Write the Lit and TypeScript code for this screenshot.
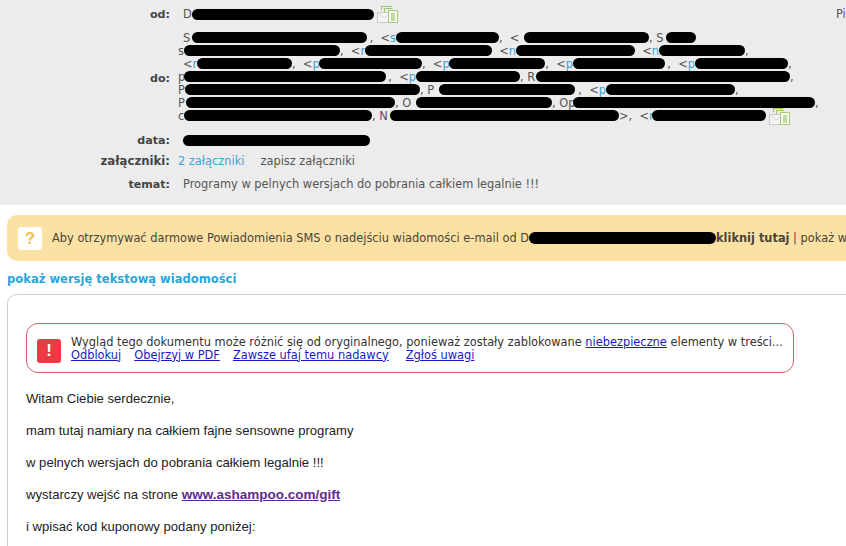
import { html, css, LitElement, svg } from "lit";
import { customElement } from "lit/decorators.js";

// text segment: [text, width, blue letter], redaction: number
type Seg = [string, number, string?] | number;

const recipients: Seg[][] = [
  [["S", 9], 175, [",  <", 29, "s"], 103, [",  <", 25], 125, [", S", 17], 30],
  [["s", 6], 156, [",  <", 25, "r"], 127, ["  <", 24, "n"], 119, ["  <", 24, "n"], 86, [",", 8]],
  [["<", 14, "r"], 95, [",  <", 27, "p"], 103, [",  <", 27, "p"], 96, [",  <", 28, "p"], 92, [",  <", 30, "p"], 93, [",", 8]],
  [["p", 6], 202, [",  <", 30, "p"], 104, [", R", 16], 254, [",", 8]],
  [["P", 7], 235, [", P", 19], 136, [",  <", 31, "p"], 129, [",", 8]],
  [["P", 8], 209, [", O", 21], 136, [", Op", 21], 242, [",", 8]],
  [["c", 6], 188, [", N", 18], 229, [">,  <", 33, "n"], 114]
];

@customElement("app-root")
export class AppRoot extends LitElement {
  static styles = css`
    :host {
      display: block;
      width: 846px;
      height: 546px;
      overflow: hidden;
      background: #fff;
      font-family: "DejaVu Sans", Verdana, sans-serif;
      font-size: 11.4px;
      color: #555;
    }
    .head {
      background: #ececec;
      height: 205px;
      padding-top: 5px;
      box-sizing: border-box;
    }
    .row {
      display: grid;
      grid-template-columns: 170px 1fr;
      column-gap: 13px;
      align-items: center;
    }
    .label {
      text-align: right;
      font-weight: bold;
      font-size: 11.1px;
      color: #444;
    }
    .label.wide { font-size: 11.7px; }
    .od { height: 17px; margin-bottom: 9px; }
    .od .value { display: flex; align-items: center; }
    .pi { margin-left: auto; white-space: nowrap; width: 10px; overflow: hidden; }
    .do { margin-bottom: 9px; }
    .do .label { padding-top: 3px; }
    .lines { margin-left: -5px; }
    .line { display: flex; align-items: center; height: 13px; white-space: nowrap; }
    .line:first-child, .line.indent { margin-left: 5px; }
    .seg { flex: none; white-space: pre; }
    .gap { text-align: right; }
    .blue, .att { color: #3aa5d6; }
    .pill {
      flex: none;
      display: inline-block;
      height: 11px;
      border-radius: 6px;
      background: #000;
    }
    .line svg { margin-left: 3px; flex: none; }
    .tall { height: 18px; margin-bottom: 3px; }
    .tall.last { margin-top: 5px; }
    .tall .value { display: flex; }
    .att-row { margin-left: -5px; }
    .att { margin-right: 16px; }
    .banner {
      margin: 10px 0 0 7px;
      width: 900px;
      height: 46px;
      box-sizing: border-box;
      padding-left: 11px;
      background: #fbe2a4;
      border-radius: 10px 0 0 10px;
      display: flex;
      align-items: center;
      white-space: pre;
      color: #4a4436;
    }
    .q {
      flex: none;
      width: 24px;
      height: 23px;
      margin-right: 10px;
      background: #fff;
      border-radius: 3px;
      text-align: center;
      font: bold 17px/23px "Liberation Sans", Arial, sans-serif;
      color: #f2c052;
    }
    .banner .pill { width: 187px; height: 12px; }
    .show {
      display: block;
      margin: 11px 0 8px 7px;
      line-height: 14px;
      font-size: 11.55px;
      font-weight: bold;
      color: #2aa6dc;
      text-decoration: none;
    }
    .card {
      margin-left: 7px;
      width: 900px;
      height: 260px;
      box-sizing: border-box;
      border: 1px solid #ccc;
      border-radius: 10px 0 0 0;
      padding: 28px 0 0 18px;
    }
    .alert {
      width: 768px;
      height: 50px;
      box-sizing: border-box;
      border: 1px solid #d2606e;
      border-radius: 12px;
      display: flex;
      align-items: center;
      padding-left: 10px;
      color: #333;
      line-height: 13px;
    }
    .alert-text { margin-top: 1px; }
    .bang {
      flex: none;
      width: 24px;
      height: 24px;
      margin: 6px 10px 0 0;
      background: #ec3a44;
      border-radius: 3px;
      text-align: center;
      font: bold 17px/24px "Liberation Sans", Arial, sans-serif;
      color: #fff;
    }
    .alert a { color: #1a1ac0; text-decoration: underline; }
    .links { display: flex; column-gap: 13px; }
    .links a:last-child { margin-left: 4px; }
    .body {
      font-family: "Liberation Sans", Arial, sans-serif;
      font-size: 13.1px;
      line-height: 16px;
      color: #222;
      margin-top: 18px;
    }
    .body p { margin: 0 0 16px; white-space: nowrap; }
    .body a { color: #5a2d91; font-size: 13.5px; font-weight: bold; text-decoration: underline; }
  `;

  private pagesIcon() {
    return html`<svg width="21" height="18" viewBox="0 0 21 18">
      ${svg`<rect x="0.5" y="7.5" width="14" height="10" fill="#f4f4f4" stroke="#c8ccc4"/>
        <path d="M0.5 8 L7 13 L14 8" fill="none" stroke="#d4d8d0"/>
        <path d="M4.5 5 V1.5 H14.5" fill="none" stroke="#9cc46c"/>
        <path d="M7.5 7 V3.5 H15.5" fill="none" stroke="#9cc46c"/>
        <rect x="11.5" y="5.5" width="9" height="12" fill="#f6fbee" stroke="#a8cc7c"/>
        <path d="M14 9 H18 M14 11 H18 M14 13 H18 M14 15 H18" stroke="#8dbb5c"/>`}
    </svg>`;
  }

  private renderLine(segs: Seg[], i: number) {
    return html`<div class="line ${i === 2 ? "indent" : ""}">
      ${segs.map((s) =>
        typeof s === "number"
          ? html`<span class="pill" style="width:${s}px"></span>`
          : html`<span class="seg ${s[2] ? "gap" : ""}" style="width:${s[1]}px">${s[0]}${s[2] ? html`<span class="blue">${s[2]}</span>` : ""}</span>`
      )}
      ${i === recipients.length - 1 ? this.pagesIcon() : ""}
    </div>`;
  }

  render() {
    return html`
      <div class="head">
        <div class="row od">
          <div class="label">od:</div>
          <div class="value">
            <span class="seg" style="width:9px">D</span>
            <span class="pill" style="width:182px"></span>
            <span style="margin-left:3px;display:flex">${this.pagesIcon()}</span>
            <span class="pi">Pi</span>
          </div>
        </div>
        <div class="row do">
          <div class="label">do:</div>
          <div class="lines">${recipients.map((l, i) => this.renderLine(l, i))}</div>
        </div>
        <div class="row tall">
          <div class="label">data:</div>
          <div class="value"><span class="pill" style="width:187px"></span></div>
        </div>
        <div class="row tall">
          <div class="label wide">załączniki:</div>
          <div class="value att-row"><span class="att">2 załączniki</span><span>zapisz załączniki</span></div>
        </div>
        <div class="row tall last">
          <div class="label">temat:</div>
          <div class="value">Programy w pelnych wersjach do pobrania całkiem legalnie !!!</div>
        </div>
      </div>
      <div class="banner"><span class="q">?</span><span>Aby otrzymywać darmowe Powiadomienia SMS o nadejściu wiadomości e-mail od D</span><span class="pill"></span><b>kliknij tutaj</b><span> | pokaż w</span></div>
      <a class="show">pokaż wersję tekstową wiadomości</a>
      <div class="card">
        <div class="alert">
          <span class="bang">!</span>
          <div class="alert-text">
            <div>Wygląd tego dokumentu może różnić się od oryginalnego, ponieważ zostały zablokowane <a>niebezpieczne</a> elementy w treści...</div>
            <div class="links"><a>Odblokuj</a><a>Obejrzyj w PDF</a><a>Zawsze ufaj temu nadawcy</a><a>Zgłoś uwagi</a></div>
          </div>
        </div>
        <div class="body">
          <p>Witam Ciebie serdecznie,</p>
          <p>mam tutaj namiary na całkiem fajne sensowne programy</p>
          <p>w pelnych wersjach do pobrania całkiem legalnie !!!</p>
          <p>wystarczy wejść na strone <a>www.ashampoo.com/gift</a></p>
          <p>i wpisać kod kuponowy podany poniżej:</p>
        </div>
      </div>
    `;
  }
}
